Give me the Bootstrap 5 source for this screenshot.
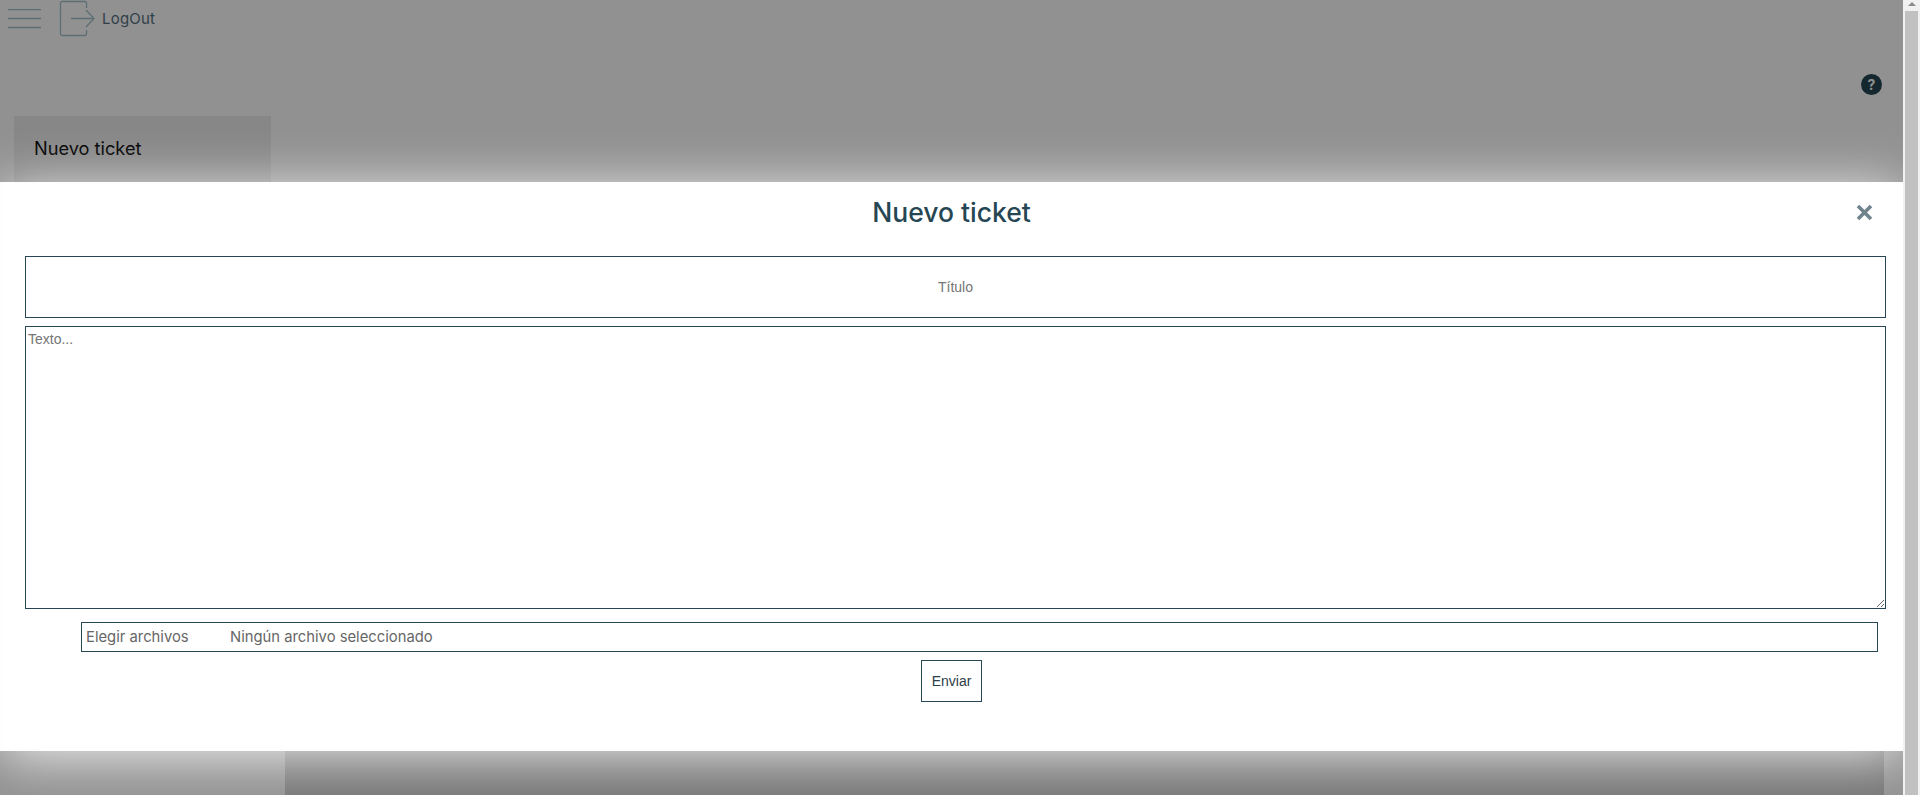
<!DOCTYPE html>
<html lang="es">
<head>
<meta charset="utf-8">
<title>Nuevo ticket</title>
<link href="https://cdn.jsdelivr.net/npm/bootstrap@5.3.0/dist/css/bootstrap.min.css" rel="stylesheet">
<style>
body { font-family: Inter, "Liberation Sans", sans-serif; color: #264653; background: #fff; }
.page-area { width: 1903px; }
.top-strip { height: 116px; }
.burger-btn { width: 34px; height: 20px; margin-left: 8px; margin-top: 9px; }
.logout-wrap { margin-left: 17px; }
.logout-text { font-size: 15px; letter-spacing: .2px; color: #55727f; margin-left: 7px; padding-top: 2px; }
.help-row { height: 0; }
.help-dot { width: 21px; height: 21px; background: #264653; color: #fff; font-size: 14px; font-weight: 700; line-height: 21px; margin-top: -42px; margin-right: 21px; }
.side-panel { width: 257px; margin-left: 14px; background: #ededed; padding: 19px 20px; height: 200px; }
.side-title { font-size: 18.2px; color: #000; }
.main-panel { width: 1599px; margin-left: 14px; margin-top: 34px; height: 700px; background: linear-gradient(#fff 0 32px, #d0d0d0 32px); }
.page-dim { background: rgba(0,0,0,.43); z-index: 10; }
.ticket-modal { top: 182px; left: 0; width: 1903px; height: 569px; background: #fff; z-index: 20; box-shadow: 0 6px 50px 0 rgba(255,255,255,.85), inset 0 0 4px 1px rgba(0,0,0,.01); padding: 0 17px 0 25px; }
.ticket-title { font-size: 26.5px; font-weight: 500; color: #264653; text-align: center; line-height: 1; padding-top: 17px; margin: 0; width: 1853px; }
.close-x { position: absolute; top: 22px; right: 30px; width: 17px; height: 17px; }
.title-input { display: block; width: 1861px; height: 62px; margin-top: 30px; border: 1px solid #264653; border-radius: 0; font-family: "Liberation Sans", sans-serif; font-size: 14px; text-align: center; padding: 0 2px; outline: 0; }
.text-input { display: block; width: 1861px; height: 283px; margin-top: 8px; border: 1px solid #264653; border-radius: 0; font-family: "Liberation Sans", sans-serif; font-size: 14px; padding: 2px; outline: 0; }
.title-input::placeholder, .text-input::placeholder { color: #757575; }
.file-box { width: 1797px; height: 30px; margin: 13px 0 0 56px; border: 1px solid #264653; font-size: 14.8px; color: #666; padding: 1px 4px 0; }
.file-btn { width: 144px; }
.send-btn { width: 61px; height: 42px; border: 1px solid #264653; background: #fff; border-radius: 0; font-family: "Liberation Sans", sans-serif; font-size: 14px; color: #2d3e48; padding: 2px 0 0; margin-top: 8px; }
.send-row { width: 1853px; }
.bar-track { width: 17px; background: #f1f1f1; }
.bar-arrow { width: 0; height: 0; margin-top: 2px; border-left: 4px solid transparent; border-right: 4px solid transparent; border-bottom: 4px solid #8b8b8b; }
.bar-thumb { width: 13px; margin-top: 5px; background: #c1c1c1; }
</style>
</head>
<body>
<div class="d-flex vh-100 overflow-hidden">
  <div class="page-area position-relative overflow-hidden flex-shrink-0">
    <div class="d-flex align-items-start top-strip">
      <svg class="burger-btn" viewBox="0 0 34 20" fill="none" stroke="#a3c4cc" stroke-width="1.3"><path d="M0 .5H33M0 9.5H33M0 18.5H33"/></svg>
      <div class="d-flex align-items-center logout-wrap">
        <svg width="36" height="37" viewBox="0 0 36 37" fill="none" stroke="#a3c4cc" stroke-width="1.3"><path d="M27.500 8V3Q27.500 1.500 26 1.500H3Q1.500 1.500 1.500 3V34Q1.500 35.500 3 35.500H26Q27.500 35.500 27.500 34V30M12 18.500H35M27 10L35 18.500L27 27"/></svg>
        <span class="logout-text">LogOut</span>
      </div>
    </div>
    <div class="help-row d-flex justify-content-end"><span class="help-dot rounded-circle text-center">?</span></div>
    <div class="d-flex">
      <div class="side-panel"><span class="side-title">Nuevo ticket</span></div>
      <div class="main-panel"></div>
    </div>
    <div class="page-dim position-absolute top-0 start-0 w-100 h-100"></div>
    <div class="ticket-modal position-absolute">
      <h2 class="ticket-title">Nuevo ticket</h2>
      <svg class="close-x" viewBox="0 0 17 17" fill="none" stroke="#6f838d" stroke-width="3.6"><path d="M2 2L15 15M15 2L2 15"/></svg>
      <input class="title-input" type="text" placeholder="Título">
      <textarea class="text-input" placeholder="Texto..."></textarea>
      <div class="file-box d-flex align-items-center"><span class="file-btn">Elegir archivos</span><span>Ningún archivo seleccionado</span></div>
      <div class="send-row text-center"><button class="send-btn" type="button">Enviar</button></div>
    </div>
  </div>
  <div class="bar-track d-flex flex-column align-items-center flex-shrink-0">
    <div class="bar-arrow"></div>
    <div class="bar-thumb flex-grow-1"></div>
  </div>
</div>
<script src="https://cdn.jsdelivr.net/npm/bootstrap@5.3.0/dist/js/bootstrap.bundle.min.js"></script>
</body>
</html>
